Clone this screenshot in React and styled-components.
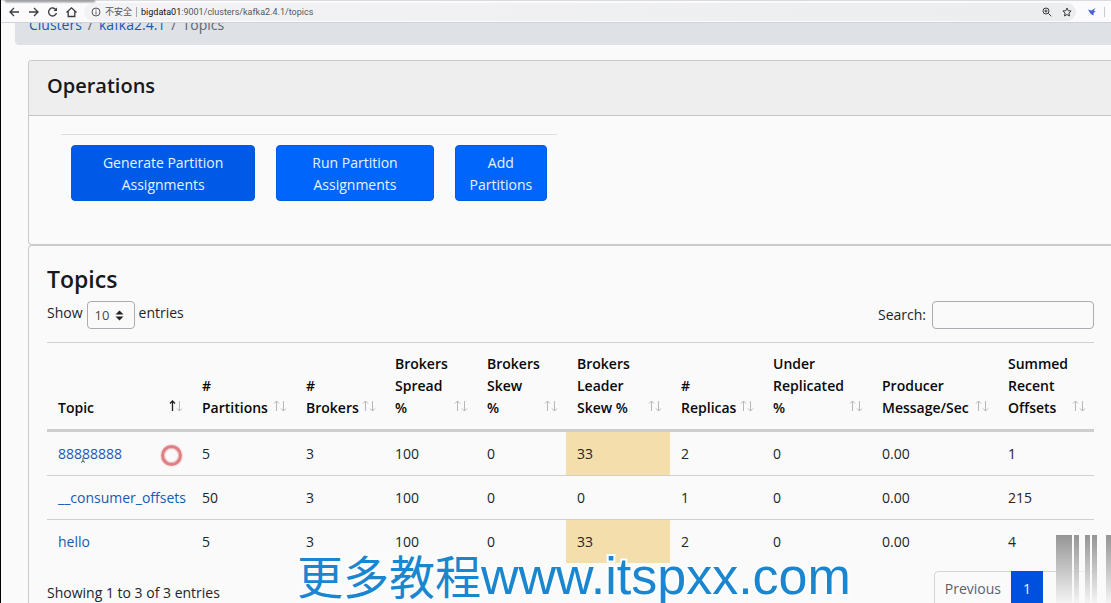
import React from 'react';
import styled, { createGlobalStyle } from 'styled-components';

const Global = createGlobalStyle`
  * { box-sizing: border-box; }
  html, body { margin: 0; overflow: hidden; }
  body {
    background: #fafafb;
    color: #212529;
    font: 14px/22px "Open Sans", "Noto Sans", sans-serif;
  }
  #root { height: 100vh; }
`;

const Window = styled.div`
  position: relative;
  height: 100vh;
  overflow: hidden;
  border-left: 1px solid #000;
`;

const BrowserBar = styled.header`
  position: relative;
  z-index: 2;
  height: 23px;
  display: flex;
  align-items: center;
  gap: 6px;
  padding: 0 0 0 7px;
  background: #fbfbfd;
  border-top: 1px solid #d9dbdf;
  border-bottom: 1px solid #d0d2d6;
  color: #222;
`;

const TabShadow = styled.div`
  position: absolute;
  top: -1px;
  left: 4px;
  width: 90px;
  height: 2px;
  background: #77797d;
  filter: blur(1px);
`;

const BarButton = styled.button`
  display: flex;
  border: 0;
  padding: 0;
  background: none;
  color: ${p => p.$color || '#3a3b3e'};
  svg { display: block; }
`;

const NavGroup = styled.nav`
  display: flex;
  gap: 6px;
`;

const AddressBar = styled.div`
  flex: 1;
  height: 18px;
  display: flex;
  align-items: center;
  gap: 4px;
  padding: 0 4px 0 7px;
  border-radius: 9px;
  background: linear-gradient(90deg, #f3f3f5, #ecedef);
  font: 9px/18px Roboto, "Noto Sans CJK SC", sans-serif;
  color: #55575b;
`;

const AddressText = styled.span`
  flex: 1;
  border-left: 1px solid #aaa;
  line-height: 10px;
  padding-left: 4px;
  b { font-weight: 400; color: #111; }
`;

const AddressActions = styled.div`
  display: flex;
  gap: 10px;
`;

const Extension = styled.div`
  display: flex;
  align-items: center;
  margin-right: 6px;
  padding: 0 7px 0 5px;
  border-right: 1px solid #c9cacc;
`;

const Breadcrumb = styled.nav`
  margin: -12px 0 15px 14px;
  padding: 3px 14px 9px;
  background: #dee1e6;
  border-radius: 4px 0 0 4px;
  color: #62676d;
`;

const Slash = styled.span`
  padding: 0 6px;
`;

const Link = styled.a`
  color: #1659b5;
  text-decoration: none;
`;

const Card = styled.section`
  margin-left: 27px;
  border: 1px solid #c9cacc;
  border-right: 0;
  border-radius: 4px 0 0 4px;
`;

const CardHeader = styled.h2`
  margin: 0;
  padding: 11px 18px 15px;
  background: #eeeeee;
  border-bottom: 1px solid #c4c4c6;
  border-radius: 4px 0 0 0;
  font: 600 20px/28px "Open Sans", sans-serif;
  color: #16181b;
`;

const Operations = styled.div`
  padding: 18px 32px 43px;
`;

const OperationRow = styled.div`
  display: flex;
  gap: 21px;
  width: 496px;
  padding: 10px 10px 0;
  border-top: 1px solid #dddee0;
`;

const ActionButton = styled.button`
  flex: 1 1 ${p => p.$width}px;
  padding: 6px 12px 4px;
  border: 1px solid #005be0;
  border-radius: 4px;
  background: ${p => p.$active ? '#005ae8' : '#0065fb'};
  color: #e6f4ff;
  font: inherit;
`;

const TopicsBody = styled.div`
  padding: 17px 17px 0 18px;
`;

const Title = styled.h1`
  margin: 0;
  font: 600 23px/32px "Open Sans", sans-serif;
  color: #16181b;
`;

const Controls = styled.div`
  display: flex;
  justify-content: space-between;
  align-items: center;
  margin: 6px 0 13px;
`;

const Field = styled.label`
  display: flex;
  align-items: ${p => p.$align || 'center'};
  gap: ${p => p.$gap};
  line-height: 24px;
`;

const SelectBox = styled.span`
  position: relative;
  display: flex;
  svg { position: absolute; right: 11px; top: 9px; pointer-events: none; }
`;

const Select = styled.select`
  appearance: none;
  width: 48px;
  height: 28px;
  padding: 0 7px;
  border: 1px solid #a9acb0;
  border-radius: 4px;
  background: #fafafb;
  color: #44484d;
  font: 13px/20px "Open Sans", sans-serif;
`;

const SearchInput = styled.input`
  width: 162px;
  height: 28px;
  padding: 0 8px;
  border: 1px solid #a9acb0;
  border-radius: 4px;
  background: #fafafb;
  font: inherit;
`;

const Table = styled.table`
  width: 100%;
  table-layout: fixed;
  border-spacing: 0;
  border-top: 1px solid #cfd0d2;
`;

const HeadCell = styled.th`
  width: ${p => p.$width}px;
  padding: 10px 8px 10px 11px;
  border-bottom: 3px solid #cdced0;
  vertical-align: bottom;
  text-align: left;
  font-weight: 600;
  white-space: nowrap;
  color: #08090b;
`;

const HeadInner = styled.div`
  display: flex;
  justify-content: space-between;
  align-items: flex-end;
  svg { flex: none; margin: 0 0 7px -12px; }
`;

const Cell = styled.td`
  padding: 11px 0 10px 11px;
  border-bottom: 1px solid #cfd0d2;
  background: ${p => p.$warn ? '#f4dfac' : 'transparent'};
  tr:last-child > & { border-bottom: 0; }
`;

const Footer = styled.footer`
  display: flex;
  justify-content: space-between;
  align-items: flex-start;
  padding-top: 8px;
`;

const Info = styled.div`
  padding-top: 11px;
`;

const Pages = styled.div`
  display: flex;
`;

const PageButton = styled.button`
  position: relative;
  z-index: ${p => p.$current ? 1 : 0};
  height: 36px;
  min-width: ${p => p.$min || 32}px;
  padding: 0 10px;
  border: 1px solid ${p => p.$current ? '#0050e0' : '#d3d5d8'};
  border-radius: ${p => p.$radius || 0};
  background: ${p => p.$current ? '#0050e0' : '#fafafb'};
  color: ${p => p.$current ? '#e6f4ff' : '#5c6167'};
  font: inherit;
  & + & { margin-left: -1px; }
`;

const Watermark = styled.div`
  position: absolute;
  z-index: 3;
  left: 296px;
  bottom: -3px;
  white-space: nowrap;
  color: #1a86cf;
  font: 52px/60px "Liberation Sans", sans-serif;
  -webkit-text-stroke: 4px #fcfdfe;
  paint-order: stroke fill;
  span { font: 46px/60px "Noto Sans CJK SC", sans-serif; }
`;

const Bars = styled.div`
  position: absolute;
  z-index: 3;
  right: 0;
  bottom: 0;
  width: 55px;
  height: 68px;
  background: linear-gradient(#fafafb00, #fafafbb0 60%);
  svg { display: block; }
`;

const ClickRing = styled.div`
  position: absolute;
  z-index: 3;
  left: 160px;
  top: 445px;
  width: 21px;
  height: 21px;
  border: 3px solid #df8084;
  border-radius: 50%;
  box-shadow: 0 0 2px #e59a9d, inset 0 0 2px #d0555b;
`;

const Caret = styled.svg`
  position: absolute;
  z-index: 3;
  left: 78px;
  top: 458px;
`;

const icon = { fill: 'none', stroke: 'currentColor', strokeWidth: 1.3 };

const Sort = ({ active }) => (
  <svg width="14" height="12" viewBox="0 0 14 12" fill="none" stroke="#b5b7ba">
    <path d="M3.5 11V1M1 3.5L3.5 1L6 3.5" stroke={active ? '#222' : '#b5b7ba'} strokeWidth={active ? 1.3 : 1} />
    <path d="M10.5 1v10M8 8.5l2.500 2.500l2.500-2.500" />
  </svg>
);

const columns = [
  [144, 'Topic'],
  [104, '#', 'Partitions'],
  [89, '#', 'Brokers'],
  [92, 'Brokers', 'Spread', '%'],
  [90, 'Brokers', 'Skew', '%'],
  [104, 'Brokers', 'Leader', 'Skew %'],
  [92, '#', 'Replicas'],
  [109, 'Under', 'Replicated', '%'],
  [126, 'Producer', 'Message/Sec'],
  [97, 'Summed', 'Recent', 'Offsets'],
];

const rows = [
  ['88888888', '5', '3', '100', '0', '33', '2', '0', '0.00', '1'],
  ['__consumer_offsets', '50', '3', '100', '0', '0', '1', '0', '0.00', '215'],
  ['hello', '5', '3', '100', '0', '33', '2', '0', '0.00', '4'],
];

export default function App() {
  return (
    <Window>
      <Global />
      <BrowserBar>
        <TabShadow />
        <NavGroup>
          <BarButton aria-label="Back"><svg width="13" height="12" viewBox="0 0 13 12" {...icon}><path d="M11 6H2.500M6 2L2 6l4 4" /></svg></BarButton>
          <BarButton aria-label="Forward"><svg width="13" height="12" viewBox="0 0 13 12" {...icon}><path d="M2 6h8.500M7 2l4 4l-4 4" /></svg></BarButton>
          <BarButton aria-label="Reload"><svg width="13" height="12" viewBox="0 0 13 12" {...icon}><path d="M10 3.800A4 4 0 1 0 10.500 7" /><path d="M11 1.500v3.500H7.500z" fill="currentColor" stroke="none" /></svg></BarButton>
          <BarButton aria-label="Home"><svg width="13" height="12" viewBox="0 0 13 12" {...icon}><path d="M1.500 6.500L6.500 1.800l5 4.700M3.200 5.500v5h6.600v-5" /></svg></BarButton>
        </NavGroup>
        <AddressBar>
          <svg width="10" height="10" viewBox="0 0 10 10" fill="none" stroke="currentColor"><circle cx="5" cy="5" r="4" /><path d="M5 4.500v3M5 2.500v1" /></svg>
          <span>不安全</span>
          <AddressText><b>bigdata01</b>:9001/clusters/kafka2.4.1/topics</AddressText>
          <AddressActions>
            <BarButton aria-label="Zoom"><svg width="10" height="10" viewBox="0 0 10 10" fill="none" stroke="currentColor"><circle cx="4" cy="4" r="3" /><path d="M6.300 6.300L9.300 9.300M2.500 4h3M4 2.500v3" /></svg></BarButton>
            <BarButton aria-label="Bookmark"><svg width="10" height="10" viewBox="0 0 10 10" fill="none" stroke="currentColor"><path d="M5 1l1.200 2.700l2.900.3L6.900 6l.6 3L5 7.500L2.500 9l.6-3L.9 4l2.900-.3z" /></svg></BarButton>
          </AddressActions>
        </AddressBar>
        <Extension>
          <BarButton aria-label="Extension" $color="#4a62d8"><svg width="10" height="10" viewBox="0 0 10 10" fill="currentColor"><path d="M1 2.500L4.500 3.500L8.500 1L6.800 4L8.800 4.500L6.500 6L6.800 8.500L4.500 7.500L3 6z" /></svg></BarButton>
        </Extension>
      </BrowserBar>

      <Breadcrumb>
        <Link href="#clusters">Clusters</Link><Slash>/</Slash><Link href="#kafka">kafka2.4.1</Link><Slash>/</Slash>Topics
      </Breadcrumb>

      <Card>
        <CardHeader>Operations</CardHeader>
        <Operations>
          <OperationRow>
            <ActionButton $width={184} $active>Generate Partition<br />Assignments</ActionButton>
            <ActionButton $width={157}>Run Partition<br />Assignments</ActionButton>
            <ActionButton $width={92}>Add<br />Partitions</ActionButton>
          </OperationRow>
        </Operations>
      </Card>

      <Card>
        <TopicsBody>
          <Title>Topics</Title>
          <Controls>
            <Field $gap="4px" $align="flex-start">
              Show
              <SelectBox>
                <Select defaultValue="10"><option>10</option><option>25</option></Select>
                <svg width="9" height="11" viewBox="0 0 9 11" fill="#222"><path d="M0.500 4.500L4.500 0.500l4 4zM0.500 6.500L4.500 10.500l4-4z" /></svg>
              </SelectBox>
              entries
            </Field>
            <Field $gap="6px">Search:<SearchInput type="search" /></Field>
          </Controls>
          <Table>
            <thead>
              <tr>
                {columns.map(([width, ...lines], i) => (
                  <HeadCell key={i} $width={width}>
                    <HeadInner>
                      <span>{lines.map((line, n) => <React.Fragment key={n}>{n > 0 && <br />}{line}</React.Fragment>)}</span>
                      <Sort active={i === 0} />
                    </HeadInner>
                  </HeadCell>
                ))}
              </tr>
            </thead>
            <tbody>
              {rows.map(row => (
                <tr key={row[0]}>
                  {row.map((value, i) => (
                    <Cell key={i} $warn={value === '33'}>
                      {i === 0 ? <Link href={'#' + value}>{value}</Link> : value}
                    </Cell>
                  ))}
                </tr>
              ))}
            </tbody>
          </Table>
          <Footer>
            <Info>Showing 1 to 3 of 3 entries</Info>
            <Pages>
              <PageButton $radius="4px 0 0 4px">Previous</PageButton>
              <PageButton $current>1</PageButton>
              <PageButton $min={52} $radius="0 4px 4px 0" aria-label="Next" />
            </Pages>
          </Footer>
        </TopicsBody>
      </Card>

      <ClickRing />
      <Caret width="8" height="5" viewBox="0 0 8 5" fill="none" stroke="#555"><path d="M4 0v3M2 4.500L4 3l2 1.500" /></Caret>
      <Watermark><span>更多教程</span>www.itspxx.com</Watermark>
      <Bars>
        <svg width="55" height="68">
          <defs><linearGradient id="fade" x1="0" y1="0" x2="0" y2="68" gradientUnits="userSpaceOnUse"><stop offset="0" stopColor="#959595" /><stop offset="1" stopColor="#f4f4f4" /></linearGradient></defs>
          <g fill="url(#fade)">
            <rect x="0" width="16" height="68" /><rect x="18" width="5" height="68" /><rect x="29" width="5" height="68" /><rect x="36" width="5" height="68" /><rect x="50" width="5" height="68" />
          </g>
        </svg>
      </Bars>
    </Window>
  );
}
